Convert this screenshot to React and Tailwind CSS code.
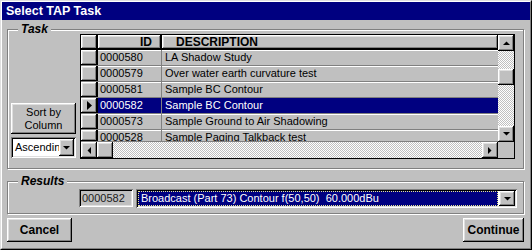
import React from "react";

const raised =
  "bg-[#c0c0c0] shadow-[inset_-1px_-1px_0_#000,inset_1px_1px_0_#fff,inset_-2px_-2px_0_#808080,inset_2px_2px_0_#dfdfdf]";
const sunken =
  "shadow-[inset_1px_1px_0_#808080,inset_-1px_-1px_0_#fff,inset_2px_2px_0_#000,inset_-2px_-2px_0_#dfdfdf]";
const etched = "border border-[#808080] shadow-[inset_1px_1px_0_#fff,1px_1px_0_#fff]";
const checker =
  "bg-[repeating-conic-gradient(#c0c0c0_0_25%,#ffffff_0_50%)] bg-[length:2px_2px]";

const rows = [
  { id: "0000580", desc: "LA Shadow Study" },
  { id: "0000579", desc: "Over water earth curvature test" },
  { id: "0000581", desc: "Sample BC Contour" },
  { id: "0000582", desc: "Sample BC Contour", selected: true },
  { id: "0000573", desc: "Sample Ground to Air Shadowing" },
  { id: "0000528", desc: "Sample Paging Talkback test" },
];

const Arrow = ({ dir }) => {
  const pts = {
    up: "0,4 7,4 3.5,0.5",
    down: "0,0 7,0 3.5,3.5",
    left: "4,0 4,7 0.5,3.5",
    right: "0,0 0,7 3.5,3.5",
  }[dir];
  const vertical = dir === "up" || dir === "down";
  return (
    <svg width={vertical ? 7 : 4} height={vertical ? 4 : 7} viewBox={vertical ? "0 0 7 4" : "0 0 4 7"}>
      <polygon points={pts} fill="#000" />
    </svg>
  );
};

const ScrollBtn = ({ dir }) => (
  <div className={`w-[16px] h-[16px] shrink-0 flex items-center justify-center ${raised}`}>
    <Arrow dir={dir} />
  </div>
);

const Row = ({ row, partial }) => (
  <div className={`flex ${partial ? "h-[12px]" : "h-[16px]"} shrink-0 border-b border-[#808080] text-[11px] leading-[15px]`}>
    <div className={`w-[17px] shrink-0 flex items-center justify-center border-r border-black ${raised}`}>
      {row.selected && (
        <svg width="5" height="9" viewBox="0 0 5 9">
          <polygon points="0,0 5,4.5 0,9" fill="#000" />
        </svg>
      )}
    </div>
    <div
      className={`w-[64px] shrink-0 pl-[2px] border-r border-[#808080] shadow-[inset_0_1px_0_#fff] ${
        row.selected ? "bg-[#000080] text-white shadow-none" : ""
      }`}
    >
      {row.id}
    </div>
    <div
      className={`flex-1 pl-[3px] whitespace-nowrap overflow-hidden shadow-[inset_0_1px_0_#fff] ${
        row.selected ? "bg-[#000080] text-white shadow-none" : ""
      }`}
    >
      {row.desc}
    </div>
  </div>
);

export default function App() {
  return (
    <div className="w-[532px] h-[250px] bg-[#c0c0c0] border border-t-[#dfdfdf] border-l-[#dfdfdf] border-r-black border-b-black font-['Liberation_Sans',Arial,sans-serif] text-black select-none">
      <div className="w-full h-full border border-t-white border-l-white border-r-[#808080] border-b-[#808080] flex flex-col">
        {/* title bar */}
        <div className="h-[18px] shrink-0 bg-[#000080] text-white font-bold text-[12.5px] leading-[18px] pl-[4px]">
          Select TAP Task
        </div>

        {/* Task group */}
        <div className={`relative mt-[9px] ml-[5px] w-[517px] h-[140px] shrink-0 ${etched}`}>
          <span className="absolute -top-[8px] left-[10px] px-[3px] bg-[#c0c0c0] text-[12px] leading-[14px] font-bold italic">
            Task
          </span>
          <div className="flex pt-[4px] pl-[3px]">
            <div className="w-[65px] h-[125px] flex flex-col justify-end gap-[3px] pb-[1px]">
              <div className={`h-[31px] flex flex-col items-center justify-center text-[11px] leading-[13px] ${raised}`}>
                <span>Sort by</span>
                <span>Column</span>
              </div>
              <div className={`h-[21px] bg-white flex items-stretch p-[2px] ${sunken}`}>
                <div className="flex-1 overflow-hidden whitespace-nowrap text-[11px] leading-[17px] pl-[2px]">
                  Ascending
                </div>
                <div className={`w-[15px] flex items-center justify-center ${raised}`}>
                  <Arrow dir="down" />
                </div>
              </div>
            </div>

            {/* grid */}
            <div className="ml-[4px] w-[435px] h-[125px] border border-black flex">
              <div className="flex-1 flex flex-col min-w-0">
                <div className="flex-1 overflow-hidden flex flex-col">
                  <div className="flex h-[15px] shrink-0 border-b border-black text-[12px] leading-[14px] font-bold">
                    <div className={`w-[17px] shrink-0 border-r border-black ${raised}`} />
                    <div className={`w-[64px] shrink-0 border-r border-black text-right pr-[9px] ${raised}`}>ID</div>
                    <div className={`flex-1 pl-[14px] ${raised}`}>DESCRIPTION</div>
                  </div>
                  {rows.map((r, i) => (
                    <Row key={r.id} row={r} partial={i === rows.length - 1} />
                  ))}
                </div>
                <div className="h-[16px] shrink-0 flex">
                  <ScrollBtn dir="left" />
                  <div className={`w-[16px] h-[16px] ${raised}`} />
                  <div className={`flex-1 ${checker}`} />
                  <ScrollBtn dir="right" />
                </div>
              </div>
              <div className="w-[16px] shrink-0 flex flex-col">
                <ScrollBtn dir="up" />
                <div className={`flex-1 flex flex-col ${checker}`}>
                  <div className="h-[18px]" />
                  <div className={`w-[16px] h-[16px] ${raised}`} />
                </div>
                <ScrollBtn dir="down" />
                <div className="h-[16px] bg-[#c0c0c0]" />
              </div>
            </div>
          </div>
        </div>

        {/* Results group */}
        <div className={`relative mt-[12px] ml-[5px] w-[517px] h-[33px] shrink-0 ${etched}`}>
          <span className="absolute -top-[8px] left-[10px] px-[3px] bg-[#c0c0c0] text-[12px] leading-[14px] font-bold italic">
            Results
          </span>
          <div className="flex pt-[7px] pl-[71px]">
            <div className={`w-[54px] h-[18px] text-[11px] leading-[18px] pl-[3px] text-[#1a1a1a] ${sunken}`}>
              0000582
            </div>
            <div className={`ml-[3px] w-[381px] h-[19px] bg-white flex p-[2px] ${sunken}`}>
              <div className="flex-1 bg-[#000080] mr-[1px] border border-dotted border-[#e8e890] text-white text-[11px] leading-[13px] pl-[2px] whitespace-pre overflow-hidden">
                {"Broadcast (Part 73) Contour f(50,50)  60.000dBu"}
              </div>
              <div className={`w-[16px] flex items-center justify-center ${raised}`}>
                <Arrow dir="down" />
              </div>
            </div>
          </div>
        </div>

        {/* buttons */}
        <div className="mt-[4px] ml-[5px] w-[517px] flex justify-between">
          <div className={`w-[65px] h-[24px] flex items-center justify-center text-[12px] font-bold ${raised}`}>
            Cancel
          </div>
          <div className={`w-[61px] h-[24px] flex items-center justify-center text-[12px] font-bold ${raised}`}>
            Continue
          </div>
        </div>
      </div>
    </div>
  );
}
